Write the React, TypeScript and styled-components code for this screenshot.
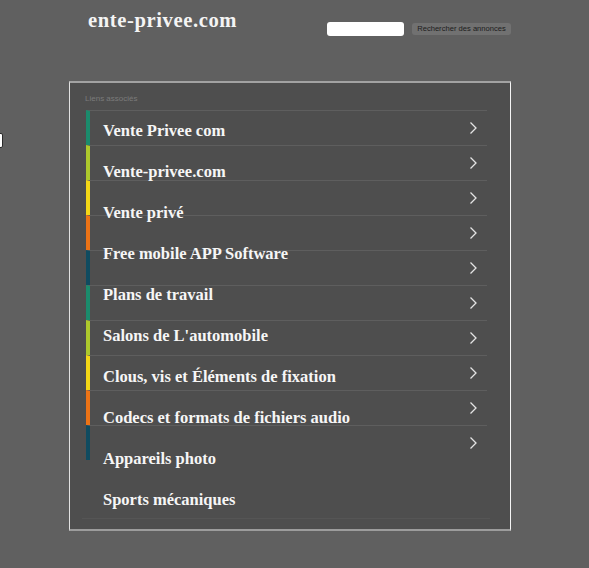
import styled, { createGlobalStyle } from "styled-components";

const GlobalStyle = createGlobalStyle`
  html, body {
    margin: 0;
    padding: 0;
    background-color: #606060;
  }
  body {
    font-family: "Liberation Sans", Arial, sans-serif;
    overflow: hidden;
  }
`;

const Page = styled.div`
  position: relative;
  width: 589px;
  height: 568px;
  padding-left: 69px;
  box-sizing: border-box;
`;

const Wrapper = styled.div`
  width: 442px;
`;

const Header = styled.header`
  display: flex;
  justify-content: space-between;
  align-items: flex-start;
  height: 81px;
`;

const Domain = styled.div`
  margin: 9px 0 0 19px;
  font-family: "Liberation Serif", "Times New Roman", serif;
  font-weight: 700;
  font-size: 20.6px;
  letter-spacing: 0.6px;
  color: #f4f4f4;
`;

const SearchForm = styled.form`
  display: flex;
  align-items: center;
  gap: 8px;
  margin-top: 22px;
`;

const SearchInput = styled.input`
  width: 77px;
  height: 14px;
  padding: 0;
  border: none;
  border-radius: 3px;
  background: #ffffff;
  box-sizing: border-box;
`;

const SearchButton = styled.button`
  width: 99px;
  height: 12px;
  padding: 0;
  border: none;
  border-radius: 3px;
  background: #717171;
  color: #1c1c1c;
  font-family: "Liberation Sans", Arial, sans-serif;
  font-size: 7.6px;
  line-height: 12px;
  text-align: center;
`;

const Panel = styled.section`
  box-sizing: border-box;
  width: 442px;
  background: #4e4e4e;
  border-left: 1px solid #e2e2e2;
  border-right: 1px solid #f4f4f4;
  border-top: 2px solid #a2a2a2;
  border-bottom: 2px solid #9c9c9c;
  padding: 10px 0 10px 15px;
`;

const Caption = styled.div`
  font-size: 8px;
  color: #7b7b7b;
  height: 17px;
  line-height: 12px;
`;

const Stack = styled.div`
  display: grid;
  width: 401px;
  margin-left: 1px;
`;

const Rows = styled.ul`
  grid-area: 1 / 1;
  list-style: none;
  margin: 0;
  padding: 0;
`;

const Row = styled.li<{ $color: string }>`
  box-sizing: border-box;
  height: 35px;
  border-top: 1px solid #5e5e5e;
  border-left: 4px solid ${(p) => p.$color};
  display: flex;
  align-items: center;
  justify-content: flex-end;
  padding-right: 10px;
`;

const Links = styled.ul`
  grid-area: 1 / 1;
  list-style: none;
  margin: 0 -3px 0 -4px;
  padding: 0;
  border-bottom: 1px solid #555555;
  height: 408px;
`;

const LinkItem = styled.li`
  height: 41px;
  padding-left: 21px;
  display: flex;
  align-items: center;
  font-family: "Liberation Serif", "Times New Roman", serif;
  font-weight: 700;
  font-size: 16.5px;
  color: #f6f6f6;
`;

const EdgeMark = styled.div`
  position: absolute;
  left: -10px;
  top: 133px;
  width: 11px;
  height: 13px;
  background: #ffffff;
  border: 1px solid #2a2a2a;
  border-radius: 2px;
`;

const Chevron = () => (
  <svg width="8" height="14" viewBox="0 0 8 14">
    <polyline
      points="1.5,1.5 7,7 1.5,12.5"
      fill="none"
      stroke="#e4e4e4"
      strokeWidth="1.3"
    />
  </svg>
);

const palette = ["#1b8b6c", "#adc92c", "#f4d716", "#ec7316", "#0f4b60"];

const links = [
  "Vente Privee com",
  "Vente-privee.com",
  "Vente privé",
  "Free mobile APP Software",
  "Plans de travail",
  "Salons de L'automobile",
  "Clous, vis et Éléments de fixation",
  "Codecs et formats de fichiers audio",
  "Appareils photo",
  "Sports mécaniques",
];

function App() {
  return (
    <Page>
      <GlobalStyle />
      <EdgeMark />
      <Wrapper>
        <Header>
          <Domain>ente-privee.com</Domain>
          <SearchForm onSubmit={(e) => e.preventDefault()}>
            <SearchInput type="text" />
            <SearchButton type="submit">Rechercher des annonces</SearchButton>
          </SearchForm>
        </Header>
        <Panel>
          <Caption>Liens associés</Caption>
          <Stack>
            <Rows>
              {links.map((_, i) => (
                <Row key={i} $color={palette[i % palette.length]}>
                  <Chevron />
                </Row>
              ))}
            </Rows>
            <Links>
              {links.map((label) => (
                <LinkItem key={label}>{label}</LinkItem>
              ))}
            </Links>
          </Stack>
        </Panel>
      </Wrapper>
    </Page>
  );
}

export default App;
